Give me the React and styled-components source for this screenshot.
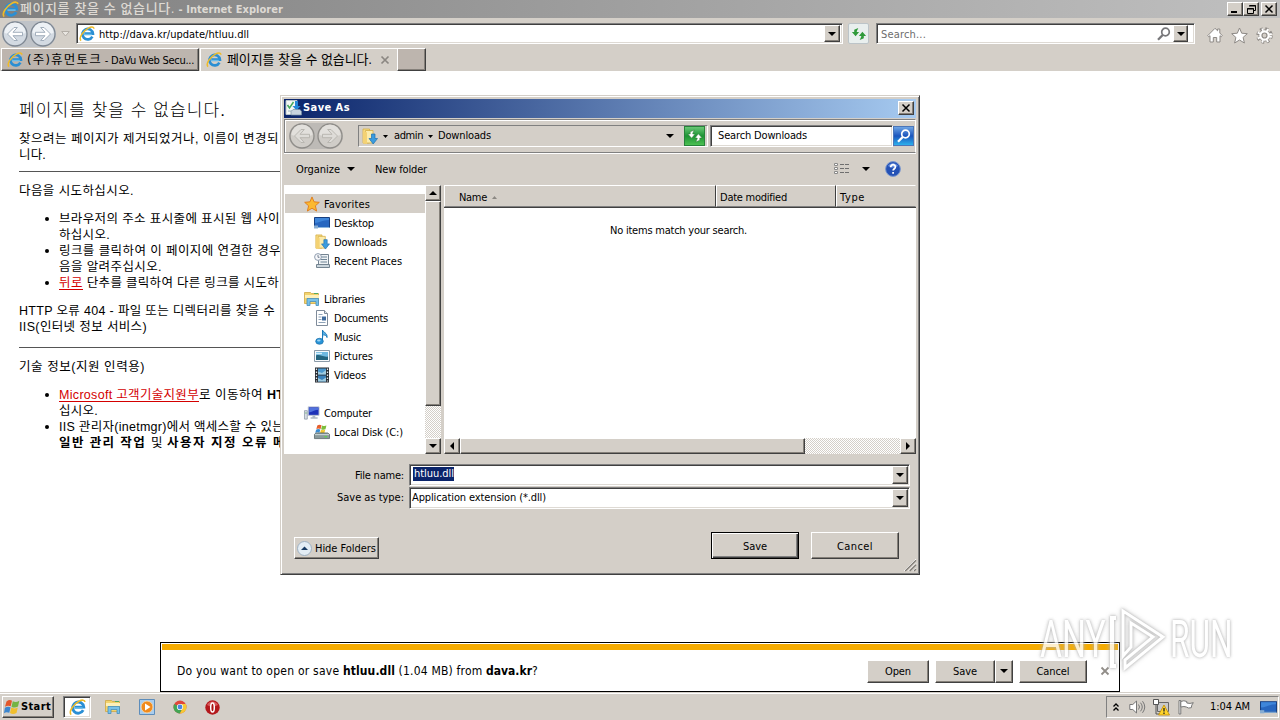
import React, { useLayoutEffect, useRef, useState } from "react";
import styled, { createGlobalStyle, css } from "styled-components";

const FACE = "#d4cfc8";
const UI_FONT = `"DejaVu Sans Condensed", "DejaVu Sans", "Noto Sans CJK KR", sans-serif`;

const GlobalStyle = createGlobalStyle`
  * { box-sizing: border-box; }
  body { margin: 0; overflow: hidden; background: #fff; }
  button { font: inherit; color: inherit; padding: 0; }
`;

const raised = css`
  border: 1px solid;
  border-color: #fff #404040 #404040 #fff;
  box-shadow: inset -1px -1px #858079;
`;
const sunken = css`
  border: 1px solid;
  border-color: #808080 #fff #fff #808080;
  box-shadow: inset 1px 1px #404040, inset -1px -1px #dedad4;
`;

/* text set to a fixed advance width, the spacing is spread over its letters */
const FitText = styled.span`
  display: inline-block;
  flex: none;
  white-space: pre;
  padding-top: ${(p) => (p.$flat ? 0 : 2)}px;
  font-weight: ${(p) => (p.$bold ? 700 : "inherit")};
  color: ${(p) => p.$color || "inherit"};
  text-decoration: ${(p) => (p.$link ? "underline" : "none")};
  text-underline-offset: 2px;
  margin-left: ${(p) => p.$ml || 0}px;
`;

const Fit = ({ w, bold, color, link, ml, flat, children }) => {
  const ref = useRef(null);
  const [gap, setGap] = useState(0);
  useLayoutEffect(() => {
    const natural = ref.current.getBoundingClientRect().width;
    setGap((w - natural) / children.length);
  }, [w, children]);
  return (
    <FitText ref={ref} $bold={bold} $color={color} $link={link} $ml={ml} $flat={flat} style={{ letterSpacing: gap }}>
      {children}
    </FitText>
  );
};

/* ---------- icons ---------- */

const Icon = styled.svg`
  display: block;
  flex: none;
  overflow: visible;
  margin-left: ${(p) => p.$ml || 0}px;
`;

const Arrow = ({ dir = "down", color = "#000", small, ml }) => {
  const d = {
    down: small ? "M0 0h5L2.5 3z" : "M0 0h8L4 4z",
    up: small ? "M0 3h5L2.5 0z" : "M0 4h8L4 0z",
    left: "M4 0v8L0 4z",
    right: "M0 0v8l4-4z",
  }[dir];
  const side = dir === "left" || dir === "right";
  return (
    <Icon $ml={ml} width={side ? 4 : small ? 5 : 8} height={side ? 8 : small ? 3 : 4}>
      <path d={d} fill={color} />
    </Icon>
  );
};

const IeIcon = ({ size = 17, ml }) => (
  <Icon $ml={ml} width={size} height={size} viewBox="0 0 17 17">
    <path d="M14.2 11.2a5.6 5.6 0 1 1 .6-3.1H5.6" fill="none" stroke="#2a8fd4" strokeWidth="2.8" />
    <path d="M13.6 9.1H5.4" stroke="#68bdec" strokeWidth="1.6" />
    <path d="M2.2 15.6C-.8 13 4.500 5 10 2.200c3-1.600 5.800-1.400 5.900.8" fill="none" stroke="#efbb28" strokeWidth="1.600" />
  </Icon>
);

const NavArrow = ({ forward, gray, size = 26 }) => (
  <Icon width={size} height={size} viewBox="0 0 26 26">
    <circle cx="13" cy="13" r="12" fill={gray ? "#d0cdc8" : "#d3dae2"} stroke={gray ? "#8f8d89" : "#7f8893"} strokeWidth="1.3" />
    <path d="M2.500 12a10.500 10.500 0 0 1 21 0q-10 4-21 0" fill={gray ? "#e2e0dc" : "#edf1f5"} />
    <path
      transform={forward ? "matrix(-1 0 0 1 26 0)" : undefined}
      d="M5.500 13 12 6.500h3.300L11 11.300h9.500v3.400H11l4.300 4.800H12z"
      fill={gray ? "#dedcd8" : "#fff"}
      stroke={gray ? "#b6b3ae" : "#9aa7b5"}
      strokeWidth=".9"
    />
  </Icon>
);

const RefreshArrows = ({ color = "#2f9a3a", edge = "none" }) => (
  <Icon width="16" height="14" viewBox="0 0 16 14" fill={color} stroke={edge} strokeWidth=".5">
    <path d="M7.300 1 3.200 2.800V5H.9l3.700 4.200L8.100 5H5.800V4.200z" />
    <path d="M8.700 13l4.100-1.800V9h2.300l-3.700-4.200L7.900 9h2.300v.8z" />
  </Icon>
);

const Magnifier = ({ color = "#77777a", size = 14, ml }) => (
  <Icon $ml={ml} width={size} height={size} viewBox="0 0 14 14" fill="none" stroke={color}>
    <circle cx="8.500" cy="5" r="3.800" strokeWidth="1.700" />
    <path d="M5.700 8 1 12.800" strokeWidth="2.300" />
  </Icon>
);

const HomeIcon = () => (
  <Icon width="16" height="16" viewBox="0 0 16 16">
    <path d="M.7 8.700 8 1.300l2.600 2.500V2h2.200v4L15.300 8.700l-1 1-1.300-1V15H9.700v-4.500H6.300V15H3V8.700l-1.300 1z" fill="#fff" stroke="#8d8985" />
  </Icon>
);
const StarIcon = ({ fill = "#fff", stroke = "#8d8985", size = 17 }) => (
  <Icon width={size} height={size} viewBox="0 0 17 17">
    <path d="m8.500 1 2.200 5.200 5.600.5-4.200 3.700 1.300 5.600-4.900-3-4.900 3 1.300-5.600L.7 6.700l5.600-.5z" fill={fill} stroke={stroke} />
  </Icon>
);
const GearIcon = () => (
  <Icon width="17" height="17" viewBox="-8.500 -8.500 17 17">
    <circle r="6.300" fill="none" stroke="#8d8985" strokeWidth="3.900" strokeDasharray="2.700 2.250" />
    <circle r="5.700" fill="#fff" stroke="#8d8985" strokeWidth=".9" />
    <circle r="6.100" fill="none" stroke="#fff" strokeWidth="2.700" strokeDasharray="1.700 3.250" strokeDashoffset="-.5" />
    <circle r="2.500" fill={FACE} stroke="#8d8985" strokeWidth="1.200" />
  </Icon>
);

const SaveDialogIcon = () => (
  <Icon width="17" height="16" viewBox="0 0 17 16">
    <path d="M1 .5h11v14H1z" fill="#f4f7f4" stroke="#b8c4cc" />
    <path d="m2.500 5 2 3 4-6" fill="none" stroke="#45a85a" strokeWidth="1.500" />
    <path d="M3 11h5" stroke="#9cb4c4" />
    <path d="M10 1h3v5h2.500l-4 4.500-4-4.500H10z" fill="#2487d8" />
    <path d="M6 11.500 8 9.500h7l1.500 2v3.500H6z" fill="#c8d4df" stroke="#7890a5" strokeWidth=".7" />
  </Icon>
);

const FolderDown = ({ size = 17 }) => (
  <Icon width={size} height={size} viewBox="0 0 17 17">
    <path d="M2 1h6.500v14H2z" fill="#f6dc84" stroke="#d5ae45" strokeWidth=".8" />
    <path d="M4.500 2.500h7.500V15H4.500z" fill="#fbebac" stroke="#d5ae45" strokeWidth=".8" />
    <path d="M2 15.500V2.500l4 2V16z" fill="#f4d273" />
    <path d="M10.500 6h3.500v4.500H16.500L12.200 16 8 10.500h2.500z" fill="#3b9cdf" stroke="#1e70b0" strokeWidth=".7" />
  </Icon>
);

const DesktopIcon = ({ size = 16 }) => (
  <Icon width={size} height={size} viewBox="0 0 16 16">
    <path d="M.5 2.500h15v10H.5z" fill="#2867c0" stroke="#173f80" />
    <path d="M1 3h14v2C8 5 5 8 1 8z" fill="#3f86da" />
    <path d="M1 12.500h14.500" stroke="#8eb7dd" />
    <path d="M0 10.500h4v3H0z" fill="#86acd2" />
  </Icon>
);
const RecentIcon = () => (
  <Icon width="16" height="16" viewBox="0 0 16 16">
    <path d="M4.500 1.500h10v10h-10z" fill="#eef2f5" stroke="#748491" />
    <path d="M2.500 11.500h13v3h-13z" fill="#cad5dc" stroke="#748491" />
    <path d="M7 4h6M6.500 6.500h6.500M6.500 9H13" stroke="#6e8495" />
    <circle cx="4" cy="4" r="3.400" fill="#f7f8fb" stroke="#909eb0" />
    <path d="M4 2v2.300h1.500" fill="none" stroke="#55657a" strokeWidth=".8" />
  </Icon>
);
const LibraryIcon = ({ size = 16 }) => (
  <Icon width={size} height={size} viewBox="0 0 16 16">
    <path d="M.5 1.500h6l1 1h7v10H.5z" fill="#f3d36c" stroke="#cfa744" strokeWidth=".8" />
    <path d="M1 4h14v3H1z" fill="#fdf0b9" />
    <path d="M10 2.500h4" stroke="#51a864" />
    <path d="M3 7.500h11.500v7H12v-4H6v4H3z" fill="#79c1e8" stroke="#458fbf" strokeWidth=".8" />
  </Icon>
);
const DocIcon = () => (
  <Icon width="16" height="16" viewBox="0 0 16 16">
    <path d="M2.500.5h8l3 3v12h-11z" fill="#fff" stroke="#7f8b9a" />
    <path d="M10.500.5v3h3" fill="#dce3ea" stroke="#7f8b9a" />
    <path d="M4.500 4.500h4M4.500 7h3M4.500 9.500h3M4.500 12.500h7" stroke="#8fa3b8" />
    <path d="M8 6.500h4v4H8z" fill="#3f6b9d" />
  </Icon>
);
const MusicIcon = () => (
  <Icon width="16" height="16" viewBox="0 0 16 16">
    <path d="M8.500 12V1c1 3 5 2.500 4.500 7.500C12.500 6.500 11 6 9.500 6" fill="#57aee4" stroke="#1b79b8" />
    <ellipse cx="5.500" cy="12.300" rx="3.800" ry="3" fill="#2894d8" stroke="#176ba6" strokeWidth=".7" />
    <ellipse cx="4.800" cy="11.400" rx="1.800" ry="1" fill="#9dd4f3" />
  </Icon>
);
const PictureIcon = () => (
  <Icon width="16" height="16" viewBox="0 0 16 16">
    <path d="M.5 2.500h15v11H.5z" fill="#f7fafc" stroke="#8a9aa8" />
    <path d="M2 4h12v8H2z" fill="#6fb9e0" />
    <path d="M2 7.500c4-1.500 7 2 12 1V12H2z" fill="#24657f" />
    <path d="M2 5.500h6" stroke="#d4eefa" strokeWidth="1.400" />
  </Icon>
);
const VideoIcon = () => (
  <Icon width="16" height="16" viewBox="0 0 16 16">
    <path d="M1 .5h14v15H1z" fill="#262b31" />
    <path d="M4 1.500h8v6H4z" fill="#4b98cf" />
    <path d="M4 8.500h8v6H4z" fill="#3a81bb" />
    <path d="M4 4.500 8 6l4-3v4.500H4zM4 11l4 2 4-2.500v4H4z" fill="#9fcbe0" />
    <path d="M2.500 1.500v13M13.500 1.500v13" stroke="#e4e8ec" strokeWidth="1.300" strokeDasharray="1.500 1.500" />
  </Icon>
);
const ComputerIcon = () => (
  <Icon width="16" height="16" viewBox="0 0 17 16">
    <path d="M4.500 1.500h11.500v9H4.500z" fill="#1e32b8" stroke="#c0c9d4" />
    <path d="M5.500 2.500h10v2c-4 0-6 2-10 3z" fill="#5071dd" />
    <path d="M9 11h3v1.500h2.500V14H7v-1.500h2z" fill="#aeb9c4" />
    <path d="M.5 5.500h3v9h-3z" fill="#d8dee4" stroke="#8996a5" strokeWidth=".8" />
    <path d="M1.500 8h1.200" stroke="#45a044" />
  </Icon>
);
const DiskIcon = () => (
  <Icon width="16" height="16" viewBox="0 0 17 16">
    <path d="M3.500 1q2-1.500 4.500-.3l-1 4q-2.500-1-4.500.2z" fill="#e65f2d" />
    <path d="M8.600 1q2.200 1.200 4.600.2l-1 4q-2.200 1-4.600-.2z" fill="#7bbd3b" />
    <path d="M2.200 5.500q2-1.200 4.500-.2l-.9 3.500q-2.300-1-4.500.2z" fill="#3b8ed3" />
    <path d="M7.400 5.700q2.200 1 4.500 0l-.9 3.500q-2.300 1-4.500-.2z" fill="#f3c52e" />
    <path d="M.5 10.500 2.500 9h12l2 1.500V15H.5z" fill="#8a9a9b" stroke="#536264" strokeWidth=".8" />
    <path d="M1 10.800h15" stroke="#d2dcdc" />
    <path d="M11 13h3" stroke="#5fd04f" strokeWidth="1.400" />
  </Icon>
);
const WinFlag = () => (
  <Icon width="16" height="16" viewBox="0 0 16 16">
    <path d="M2.500 2.500q3-2.500 5.500-.8L6.700 7.300Q4 6 1 7.800z" fill="#e2572b" />
    <path d="M8.800 2.200q3 1.700 6.500-.5L14 7.500q-3.500 2-6.500.2z" fill="#74b443" />
    <path d="M.9 8.700q3-1.800 5.700-.4l-1.300 5.500q-3-1.500-5.300.4z" fill="#3c86cf" />
    <path d="M7.300 8.600q3 1.700 6.500-.1l-1.300 5.500q-3.500 2-6.500.1z" fill="#f0bf2e" />
  </Icon>
);
const PlayerIcon = () => (
  <Icon width="16" height="16" viewBox="0 0 16 16">
    <path d="M.5.5h15v15H.5z" fill="#a9cdee" stroke="#5d8dbb" />
    <circle cx="8" cy="8" r="5.900" fill="#f08a1d" stroke="#fbd7a3" strokeWidth=".8" />
    <path d="M6 4.500v7L11.500 8z" fill="#fff" />
  </Icon>
);
const ChromeIcon = () => (
  <Icon width="14" height="14" viewBox="0 0 14 14">
    <circle cx="7" cy="7" r="6.500" fill="#e0473a" />
    <path d="M7 7 1.200 4A6.500 6.500 0 0 0 6.800 13.500L9.500 8.500z" fill="#42a554" />
    <path d="M7 4h5.800A6.500 6.500 0 0 1 6.800 13.500L9.800 8z" fill="#f6c934" />
    <circle cx="7" cy="7" r="3.100" fill="#fff" />
    <circle cx="7" cy="7" r="2.400" fill="#4a86df" />
  </Icon>
);
const OperaIcon = () => (
  <Icon width="15" height="15" viewBox="0 0 15 15">
    <circle cx="7.500" cy="7.500" r="7.200" fill="#b3181c" />
    <path d="M2 5a6 6 0 0 1 11 0Q7 8 2 5" fill="#d9595a" />
    <ellipse cx="7.500" cy="7.500" rx="1.800" ry="4.600" fill="#a11" stroke="#fff" strokeWidth="1.500" />
  </Icon>
);

/* ---------- browser chrome ---------- */

const Screen = styled.div`
  width: 1280px;
  height: 720px;
  position: relative;
  display: flex;
  flex-direction: column;
  overflow: hidden;
  background: #fff;
  font: 11px/14px ${UI_FONT};
  font-stretch: condensed;
  color: #000;
`;
const TitleBar = styled.div`
  height: 18px;
  flex: none;
  display: flex;
  align-items: center;
  padding: 0 3px 0 2px;
  background: linear-gradient(90deg, #808080, #c0c0c0);
  color: #dedad4;
`;
const HangulText = styled.span`
  font-size: ${(p) => p.$size || 13}px;
  font-weight: ${(p) => p.$weight || 400};
  display: inline-flex;
`;
const Spacer = styled.div`
  flex: 1;
`;
const CaptionButton = styled.button`
  ${raised}
  width: ${(p) => p.$w || 16}px;
  height: 14px;
  flex: none;
  background: ${FACE};
  margin-left: ${(p) => p.$ml || 0}px;
  display: flex;
  align-items: center;
  justify-content: center;
`;
const NavBar = styled.div`
  height: 30px;
  flex: none;
  display: flex;
  align-items: center;
  padding: 1px 7px 0 2px;
  background: ${FACE};
`;
const NavPair = styled.div`
  display: flex;
  gap: ${(p) => p.$gap}px;
  background: ${(p) => p.$bg};
  border-radius: 14px;
`;
const Field = styled.div`
  ${sunken}
  width: ${(p) => p.$w}px;
  height: ${(p) => p.$h || 21}px;
  flex: none;
  margin-left: ${(p) => p.$ml || 0}px;
  padding: 2px ${(p) => p.$pr || 2}px 2px ${(p) => p.$pl || 2}px;
  display: flex;
  align-items: center;
  background: #fff;
`;
const DropButton = styled.button`
  ${raised}
  width: ${(p) => p.$w || 16}px;
  height: ${(p) => p.$h || 17}px;
  flex: none;
  background: ${FACE};
  display: flex;
  align-items: center;
  justify-content: center;
`;
const RefreshButton = styled.button`
  width: 21px;
  height: 21px;
  flex: none;
  margin-left: 5px;
  border: 1px solid #bcc4c8;
  border-radius: 2px;
  background: #e9efee;
  display: flex;
  align-items: center;
  justify-content: center;
`;
const ToolIcons = styled.div`
  display: flex;
  gap: 8px;
  margin: 3px 0 0 12px;
`;
const TabBar = styled.div`
  height: 23px;
  flex: none;
  display: flex;
  background: ${FACE};
  padding-left: 1px;
`;
const Tab = styled.div`
  width: ${(p) => p.$w}px;
  display: flex;
  align-items: center;
  padding: 0 0 0 5px;
  background: ${(p) => (p.$active ? FACE : "#bdb5ae")};
  border-top: 1px solid #fff;
  border-left: 1px solid #fff;
  ${(p) =>
    !p.$active &&
    css`
      border-right: 1px solid #404040;
      border-bottom: 1px solid #404040;
      box-shadow: inset -1px -1px #85807a;
    `}
  margin-right: ${(p) => p.$mr || 0}px;
`;

const BrowserChrome = () => (
  <>
    <TitleBar>
      <IeIcon size={17} />
      <HangulText $weight={500}>
        <Fit w={155} ml={1} flat>페이지를 찾을 수 없습니다.</Fit>
      </HangulText>
      <Fit w={108} ml={0} bold>{" - Internet Explorer"}</Fit>
      <Spacer />
      <CaptionButton>
        <Icon width="10" height="8"><path d="M1 6h6v2H1z" /></Icon>
      </CaptionButton>
      <CaptionButton>
        <Icon width="9" height="9" fill="none" stroke="#000"><path d="M2.500.5h6v5h-2M2 1h7M.5 3.500h6v5h-6zM0 4h7" /></Icon>
      </CaptionButton>
      <CaptionButton $ml={2}>
        <Icon width="8" height="8" stroke="#000" strokeWidth="1.500"><path d="m.5.5 7 7m0-7-7 7" /></Icon>
      </CaptionButton>
    </TitleBar>
    <NavBar>
      <NavPair $gap={2} $bg="#bfc3c8">
        <NavArrow />
        <NavArrow forward />
      </NavPair>
      <Icon $ml={5} width="9" height="6"><path d="M.7.5h7.600L4.500 5z" fill="#e9e6e1" stroke="#b3aea7" /></Icon>
      <Field $w={767} $ml={6}>
        <IeIcon size={16} />
        <Fit w={150} ml={4}>http://dava.kr/update/htluu.dll</Fit>
        <Spacer />
        <DropButton><Arrow /></DropButton>
      </Field>
      <RefreshButton><RefreshArrows /></RefreshButton>
      <Field $w={319} $ml={7} $pl={4} $pr={6}>
        <Fit w={45} color="#6d6d6d">Search...</Fit>
        <Spacer />
        <Magnifier />
        <Icon width="2" height="1" />
        <DropButton $w={15}><Arrow /></DropButton>
      </Field>
      <ToolIcons>
        <HomeIcon />
        <StarIcon />
        <GearIcon />
      </ToolIcons>
    </NavBar>
    <TabBar>
      <Tab $w={198} $mr={1}>
        <IeIcon size={16} />
        <HangulText $size={12.5}>
          <Fit w={75} ml={4} flat>(주)휴먼토크</Fit>
        </HangulText>
        <Fit w={92} ml={0}>{" - DaVu Web Secu..."}</Fit>
      </Tab>
      <Tab $w={197} $active>
        <IeIcon size={16} />
        <HangulText>
          <Fit w={145} ml={5} flat>페이지를 찾을 수 없습니다.</Fit>
        </HangulText>
        <Icon $ml={9} width="8" height="8" stroke="#8b8782" strokeWidth="1.700"><path d="m.5.500 7 7m0-7-7 7" /></Icon>
      </Tab>
      <Tab $w={29} />
    </TabBar>
  </>
);

/* ---------- web page ---------- */

const Page = styled.div`
  flex: 1;
  min-height: 0;
  padding: 27px 0 0 19px;
  overflow: hidden;
  background: #fff;
  font: 12.5px/16px "Liberation Sans", "Noto Sans CJK KR", sans-serif;
`;
const Heading = styled.div`
  height: 32px;
  font-size: 17px;
  font-weight: 300;
  line-height: 21px;
`;
const Block = styled.div`
  margin-bottom: ${(p) => p.$mb}px;
`;
const Line = styled.div`
  height: 16px;
  display: flex;
  align-items: center;
  white-space: nowrap;
`;
const Rule = styled.div`
  height: 1px;
  width: 640px;
  background: #555;
  margin-bottom: 10px;
`;
const Bullets = styled.div`
  padding-left: 40px;
  margin-bottom: 12px;
`;
const BulletLine = styled(Line)`
  &::before {
    content: "";
    width: 4px;
    height: 4px;
    margin: 1px 10px 0 -14px;
    border-radius: 50%;
    background: #000;
  }
`;

const ErrorPage = () => (
  <Page>
    <Heading><Fit w={207}>페이지를 찾을 수 없습니다.</Fit></Heading>
    <Block $mb={9}>
      <Line><Fit w={260}>찾으려는 페이지가 제거되었거나, 이름이 변경되</Fit></Line>
      <Line><Fit w={27}>니다.</Fit></Line>
    </Block>
    <Rule />
    <Block $mb={12}>
      <Line><Fit w={115}>다음을 시도하십시오.</Fit></Line>
    </Block>
    <Bullets>
      <BulletLine><Fit w={221}>브라우저의 주소 표시줄에 표시된 웹 사이</Fit></BulletLine>
      <Line><Fit w={51}>하십시오.</Fit></Line>
      <BulletLine><Fit w={222}>링크를 클릭하여 이 페이지에 연결한 경우</Fit></BulletLine>
      <Line><Fit w={103}>음을 알려주십시오.</Fit></Line>
      <BulletLine>
        <Fit w={24} link color="#d40000">뒤로</Fit>
        <Fit w={196}>{" 단추를 클릭하여 다른 링크를 시도하"}</Fit>
      </BulletLine>
    </Bullets>
    <Block $mb={13}>
      <Line><Fit w={256}>HTTP 오류 404 - 파일 또는 디렉터리를 찾을 수</Fit></Line>
      <Line><Fit w={128}>IIS(인터넷 정보 서비스)</Fit></Line>
    </Block>
    <Rule />
    <Block $mb={12}>
      <Line><Fit w={126}>기술 정보(지원 인력용)</Fit></Line>
    </Block>
    <Bullets>
      <BulletLine>
        <Fit w={140} link color="#d40000">Microsoft 고객기술지원부</Fit>
        <Fit w={68}>{"로 이동하여 "}</Fit>
        <Fit w={34} bold>HTTP</Fit>
      </BulletLine>
      <Line><Fit w={39}>십시오.</Fit></Line>
      <BulletLine><Fit w={225}>IIS 관리자(inetmgr)에서 액세스할 수 있는</Fit></BulletLine>
      <Line>
        <Fit w={92} bold>{"일반 관리 작업 "}</Fit>
        <Fit w={16}>{"및 "}</Fit>
        <Fit w={119} bold>사용자 지정 오류 메</Fit>
      </Line>
    </Bullets>
  </Page>
);

/* ---------- save dialog ---------- */

const Dialog = styled.div`
  position: absolute;
  left: 280px;
  top: 95px;
  width: 640px;
  height: 480px;
  padding: 3px 3px 2px;
  border: 1px solid;
  border-color: ${FACE} #404040 #404040 ${FACE};
  box-shadow: inset 1px 1px #fff, inset -1px -1px #808080;
  background: ${FACE};
  display: flex;
  flex-direction: column;
`;
const DialogTitle = styled.div`
  height: 19px;
  flex: none;
  display: flex;
  align-items: center;
  padding: 0 2px 1px 1px;
  color: #fff;
  background: linear-gradient(90deg, #0a246a, #a6caf0);
`;
const DialogNav = styled.div`
  height: 34px;
  flex: none;
  margin-top: 1px;
  padding: 0 2px 0 4px;
  display: flex;
  align-items: center;
  border: 1px solid #808080;
  border-right-color: #fff;
  box-shadow: inset 1px 1px #fff, 0 1px #fff;
`;
const PathBox = styled.div`
  width: 350px;
  height: 22px;
  flex: none;
  margin-left: 15px;
  padding: 0 2px;
  display: flex;
  align-items: center;
  border: 1px solid;
  border-color: #808080 #fff #fff #808080;
`;
const SquareButton = styled.button`
  width: 21px;
  height: 20px;
  flex: none;
  display: flex;
  align-items: center;
  justify-content: center;
  border: 1px solid ${(p) => p.$edge};
  background: ${(p) => p.$bg};
`;
const DialogTools = styled.div`
  height: 32px;
  flex: none;
  display: flex;
  align-items: center;
  padding: 0 15px 0 12px;
`;
const Panes = styled.div`
  height: 269px;
  flex: none;
  display: flex;
`;
const Tree = styled.div`
  width: 141px;
  padding-top: 9px;
  background: #fff;
`;
const TreeRow = styled.div`
  height: 19px;
  display: flex;
  align-items: center;
  gap: 4px;
  margin-left: 1px;
  padding-left: ${(p) => (p.$child ? 29 : 19)}px;
  background: ${(p) => (p.$selected ? FACE : "transparent")};
`;
const Track = styled.div`
  display: flex;
  flex: none;
  flex-direction: ${(p) => (p.$row ? "row" : "column")};
  ${(p) => (p.$row ? "height: 16px;" : "width: 16px;")}
  background: repeating-conic-gradient(#fff 0 25%, ${FACE} 0 50%) 0 0 / 2px 2px;
`;
const Thumb = styled.div`
  ${raised}
  flex: none;
  width: ${(p) => p.$w}px;
  height: ${(p) => p.$h}px;
  background: ${FACE};
`;
const List = styled.div`
  flex: 1;
  margin-left: 3px;
  display: flex;
  flex-direction: column;
  background: #fff;
`;
const ListHead = styled.div`
  height: 23px;
  display: flex;
  border-bottom: 1px solid #404040;
`;
const HeadCell = styled.div`
  width: ${(p) => p.$w}px;
  padding: 2px 0 0 ${(p) => p.$pl}px;
  display: flex;
  align-items: center;
  background: ${FACE};
  border: 1px solid;
  border-color: #fff ${(p) => (p.$last ? FACE : "#404040")} #808080 #fff;
`;
const ListBody = styled.div`
  flex: 1;
  padding: 14px 3px 0 0;
  text-align: center;
`;
const FormRow = styled.div`
  display: flex;
  align-items: center;
  height: 23px;
`;
const FormLabel = styled.label`
  width: 120px;
  margin-right: 5px;
  text-align: right;
`;
const Selected = styled.span`
  display: inline-flex;
  height: 14px;
  margin-bottom: 1px;
  background: #0a246a;
  color: #fff;
`;
const DialogFoot = styled.div`
  flex: 1;
  padding-top: 9px;
`;
const FootButtons = styled.div`
  height: 50px;
  margin-top: 14px;
  padding: 9px 0 0 10px;
  display: flex;
`;
const Button = styled.button`
  ${raised}
  width: ${(p) => p.$w}px;
  height: ${(p) => p.$h}px;
  margin-left: ${(p) => p.$ml || 0}px;
  margin-top: ${(p) => p.$mt || 0}px;
  flex: none;
  display: flex;
  align-items: center;
  justify-content: center;
  background: ${FACE};
  ${(p) =>
    p.$primary &&
    css`
      border-color: #000;
      box-shadow: inset 1px 1px #fff, inset -1px -1px #404040, inset -2px -2px #808080;
    `}
`;
const Grip = styled(Icon)`
  margin: 27px 0 0 5px;
`;

const TREE = [
  { label: "Favorites", w: 46, icon: <StarIcon size={16} fill="#fbb92f" stroke="#df7c1c" />, selected: true },
  { label: "Desktop", w: 40, icon: <DesktopIcon />, child: true },
  { label: "Downloads", w: 53, icon: <FolderDown size={16} />, child: true },
  { label: "Recent Places", w: 68, icon: <RecentIcon />, child: true },
  {},
  { label: "Libraries", w: 41, icon: <LibraryIcon /> },
  { label: "Documents", w: 54, icon: <DocIcon />, child: true },
  { label: "Music", w: 27, icon: <MusicIcon />, child: true },
  { label: "Pictures", w: 39, icon: <PictureIcon />, child: true },
  { label: "Videos", w: 32, icon: <VideoIcon />, child: true },
  {},
  { label: "Computer", w: 48, icon: <ComputerIcon /> },
  { label: "Local Disk (C:)", w: 69, icon: <DiskIcon />, child: true },
];

const SaveDialog = () => (
  <Dialog>
    <DialogTitle>
      <SaveDialogIcon />
      <Fit w={47} ml={1} bold flat>Save As</Fit>
      <Spacer />
      <CaptionButton $w={16}>
        <Icon width="8" height="8" stroke="#000" strokeWidth="1.500"><path d="m.5.5 7 7m0-7-7 7" /></Icon>
      </CaptionButton>
    </DialogTitle>
    <DialogNav>
      <NavPair $gap={2} $bg="#bdbab6">
        <NavArrow gray />
        <NavArrow gray forward />
      </NavPair>
      <PathBox>
        <FolderDown />
        <Arrow small ml={5} />
        <Fit w={29} ml={6} flat>admin</Fit>
        <Arrow small ml={5} />
        <Fit w={53} ml={5} flat>Downloads</Fit>
        <Spacer />
        <Arrow />
        <Icon width="10" height="1" />
        <SquareButton $edge="#27833a" $bg="linear-gradient(#69c776, #1d9434 50%, #4cc052)">
          <RefreshArrows color="#fff" edge="#26752f" />
        </SquareButton>
      </PathBox>
      <Field $w={183} $h={22} $ml={2} $pl={7}>
        <Fit w={89} flat>Search Downloads</Fit>
      </Field>
      <SquareButton $edge="#4b76b8" $bg="linear-gradient(#6da4e4, #1b55bd 50%, #2cb0ec)">
        <Magnifier color="#fff" />
      </SquareButton>
    </DialogNav>
    <DialogTools>
      <Fit w={44}>Organize</Fit>
      <Arrow ml={7} />
      <Fit w={52} ml={20}>New folder</Fit>
      <Spacer />
      <Icon width="15" height="12" fill="none">
        <path d="M.5.5h3v2h-3zM.5 4.500h3v2h-3zM.5 8.500h3v2h-3z" fill="#fff" stroke="#8a8a8a" />
        <path d="M6 1.500h9M6 5.500h9M6 9.500h9" stroke="#6f6f6f" strokeDasharray="4 1" />
      </Icon>
      <Arrow ml={13} />
      <Icon $ml={15} width="16" height="16" viewBox="0 0 16 16">
        <circle cx="8" cy="8" r="7.400" fill="#2451b5" stroke="#7b98cf" />
        <path d="M3 5a6 6 0 0 1 10 0Q8 8 3 5" fill="#6d93df" />
        <path d="M5.700 6.200C5.700 2.800 10.500 3 10.400 6c0 1.700-2.300 1.800-2.300 3.600M8.100 11v1.700" fill="none" stroke="#fff" strokeWidth="1.700" />
      </Icon>
    </DialogTools>
    <Panes>
      <Tree>
        {TREE.map((row, i) => (
          <TreeRow key={i} $child={row.child} $selected={row.selected}>
            {row.icon}
            {row.label && <Fit w={row.w}>{row.label}</Fit>}
          </TreeRow>
        ))}
      </Tree>
      <Track>
        <DropButton $h={16}><Arrow dir="up" /></DropButton>
        <Thumb $w={16} $h={205} />
        <Spacer />
        <DropButton $h={16}><Arrow /></DropButton>
      </Track>
      <List>
        <ListHead>
          <HeadCell $w={272} $pl={14}>
            <Fit w={28}>Name</Fit>
            <Arrow dir="up" small color="#8b8883" ml={5} />
          </HeadCell>
          <HeadCell $w={120} $pl={3}><Fit w={67}>Date modified</Fit></HeadCell>
          <HeadCell $w={80} $pl={3} $last><Fit w={25}>Type</Fit></HeadCell>
        </ListHead>
        <ListBody><Fit w={137}>No items match your search.</Fit></ListBody>
        <Track $row>
          <DropButton $h={16}><Arrow dir="left" /></DropButton>
          <Thumb $w={345} $h={16} />
          <Spacer />
          <DropButton $h={16}><Arrow dir="right" /></DropButton>
        </Track>
      </List>
    </Panes>
    <DialogFoot>
      <FormRow>
        <FormLabel><Fit w={49}>File name:</Fit></FormLabel>
        <Field $w={501} $h={22} $pl={3} $pr={1}>
          <Selected><Fit w={40} flat ml={1}>htluu.dll</Fit></Selected>
          <Spacer />
          <DropButton $h={18}><Arrow /></DropButton>
        </Field>
      </FormRow>
      <FormRow>
        <FormLabel><Fit w={67} flat>Save as type:</Fit></FormLabel>
        <Field $w={501} $h={22} $pl={1} $pr={1}>
          <Fit w={134} ml={1} flat>Application extension (*.dll)</Fit>
          <Spacer />
          <DropButton $h={18}><Arrow /></DropButton>
        </Field>
      </FormRow>
      <FootButtons>
        <Button $w={85} $h={22} $mt={5}>
          <Icon width="15" height="15" viewBox="0 0 15 15">
            <circle cx="7.500" cy="7.500" r="7" fill="#e3edf5" stroke="#9eb1c3" />
            <path d="M4 9h7L7.500 5.500z" fill="#173a63" />
          </Icon>
          <Fit w={61} ml={3}>Hide Folders</Fit>
        </Button>
        <Button $w={88} $h={27} $ml={332} $primary><Fit w={24}>Save</Fit></Button>
        <Button $w={88} $h={27} $ml={12}><Fit w={36}>Cancel</Fit></Button>
        <Grip width="12" height="12">
          <path d="M0 12 12 0M4.500 12 12 4.500M9 12l3-3" stroke="#fff" />
          <path d="M1.200 12 12 1.200M5.700 12 12 5.700M10 12l2-2" stroke="#807c76" strokeWidth="1.300" />
        </Grip>
      </FootButtons>
    </DialogFoot>
  </Dialog>
);

/* ---------- download bar ---------- */

const DownloadBar = styled.div`
  position: absolute;
  left: 160px;
  top: 642px;
  width: 960px;
  height: 50px;
  padding: 1px 1px 0 1px;
  border: 1px solid #000;
  background: #fff;
`;
const DownloadStripe = styled.div`
  height: 6px;
  margin-bottom: 1px;
  background: #f5ab00;
`;
const DownloadRow = styled.div`
  height: 40px;
  padding: 0 9px 0 15px;
  display: flex;
  align-items: center;
`;
const Message = styled.div`
  display: flex;
  font-size: 12px;
  padding-bottom: 3px;
`;

/* ---------- taskbar ---------- */

const Taskbar = styled.div`
  height: 28px;
  flex: none;
  display: flex;
  align-items: center;
  padding: 1px 1px 0 2px;
  border-top: 1px solid ${FACE};
  box-shadow: inset 0 1px #fff;
  background: ${FACE};
`;
const StartButton = styled.button`
  ${raised}
  width: 52px;
  height: 22px;
  display: flex;
  align-items: center;
  padding-left: 1px;
  background: ${FACE};
`;
const ActiveTask = styled.div`
  ${sunken}
  width: 28px;
  height: 22px;
  margin-left: 9px;
  display: flex;
  align-items: center;
  justify-content: center;
  background: #fff;
`;
const QuickLaunch = styled.div`
  display: flex;
  align-items: center;
  gap: 18px;
  margin-left: 14px;
`;
const Tray = styled.div`
  width: 173px;
  height: 22px;
  display: flex;
  align-items: center;
  padding-left: 6px;
  border: 1px solid;
  border-color: #808080 #fff #fff #808080;
`;

/* ---------- watermark ---------- */

const Watermark = styled.div`
  position: absolute;
  left: 1040px;
  top: 606px;
  height: 68px;
  display: flex;
  align-items: center;
  opacity: 0.8;
`;
const MarkWord = styled.div`
  width: ${(p) => p.$w}px;
  font: 400 51px/60px Roboto, sans-serif;
  color: #fff;
  text-shadow: 0 0 3px #aaa, 0 0 5px #bbb;
  white-space: nowrap;

  span {
    display: inline-block;
    transform: scaleX(${(p) => p.$scale});
    transform-origin: 0 50%;
  }
`;
const MarkLogo = styled(Icon)`
  filter: drop-shadow(0 0 1px #aaa) drop-shadow(0 0 2px #bbb);
`;

const App = () => (
  <>
    <GlobalStyle />
    <Screen>
      <BrowserChrome />
      <ErrorPage />
      <Taskbar>
        <StartButton>
          <WinFlag />
          <Fit w={30} ml={1} bold flat>Start</Fit>
        </StartButton>
        <ActiveTask><IeIcon size={17} /></ActiveTask>
        <QuickLaunch>
          <LibraryIcon />
          <PlayerIcon />
          <ChromeIcon />
          <OperaIcon />
        </QuickLaunch>
        <Spacer />
        <Tray>
          <Icon width="6" height="9" fill="none" stroke="#000" strokeWidth="1.300"><path d="m.5 3.500 2.500-2.500 2.500 2.500m-5 4L3 5l2.500 2.500" /></Icon>
          <Icon $ml={10} width="17" height="16" fill="none" stroke="#777" strokeWidth="1">
            <path d="M.8 5.500h3L7.500 2v12L3.800 10.500h-3z" fill="#fff" />
            <path d="M9.500 5.500q2 2.500 0 5M11.500 3.700q3.500 4.300 0 8.600M13.500 2.200q4.500 5.800 0 11.600" />
          </Icon>
          <Icon $ml={7} width="17" height="17">
            <path d="M4.500 3.500h11v9h-11z" fill="#c9c9c9" stroke="#666" />
            <path d="M.5.500h5v5h-5zM3 6v9h5" fill="none" stroke="#555" />
            <path d="M1 1h4v4H1z" fill="#fff" />
            <path d="m11 6 5.500 10h-11z" fill="#ffd42a" stroke="#c18b00" strokeWidth=".8" />
            <path d="M11 9v3.500m0 1v1.500" stroke="#222" strokeWidth="1.300" />
          </Icon>
          <Icon $ml={8} width="16" height="16" fill="#fff" stroke="#777">
            <path d="M1 1.500h1.800V15H1z" />
            <path d="M2.800 2.500q3-1.500 6 0v1.500q3 1 6.500-.3-2 2.300-2 5-3 1-5-.7-2-1-5.500 0z" />
          </Icon>
          <Fit w={40} ml={16} flat>1:04 AM</Fit>
          <Icon width="10" height="1" />
          <DesktopIcon size={17} />
        </Tray>
      </Taskbar>
      <SaveDialog />
      <DownloadBar>
        <DownloadStripe />
        <DownloadRow>
          <Message>
            <Fit w={166}>{"Do you want to open or save "}</Fit>
            <Fit w={52} bold>htluu.dll</Fit>
            <Fit w={91}>{" (1.04 MB) from "}</Fit>
            <Fit w={46} bold>dava.kr</Fit>
            <Fit w={6}>?</Fit>
          </Message>
          <Spacer />
          <Button $w={62} $h={23}><Fit w={26}>Open</Fit></Button>
          <Button $w={60} $h={23} $ml={6}><Fit w={24}>Save</Fit></Button>
          <Button $w={18} $h={23}><Arrow /></Button>
          <Button $w={68} $h={23} $ml={6}><Fit w={33}>Cancel</Fit></Button>
          <Icon $ml={14} width="8" height="8" stroke="#918d88" strokeWidth="1.800"><path d="m.5.500 7 7m0-7-7 7" /></Icon>
        </DownloadRow>
      </DownloadBar>
      <Watermark>
        <MarkWord $w={70} $scale={0.66}><span>ANY</span></MarkWord>
        <MarkLogo width="60" height="68" fill="none" stroke="#fff" strokeWidth="4">
          <path d="M6 12H2v48h4" />
          <path d="M13 50V5l40 26-38 31v-8l28-23-22-14v24z" strokeWidth="3" />
        </MarkLogo>
        <MarkWord $w={64} $scale={0.62}><span>RUN</span></MarkWord>
      </Watermark>
    </Screen>
  </>
);

export default App;
